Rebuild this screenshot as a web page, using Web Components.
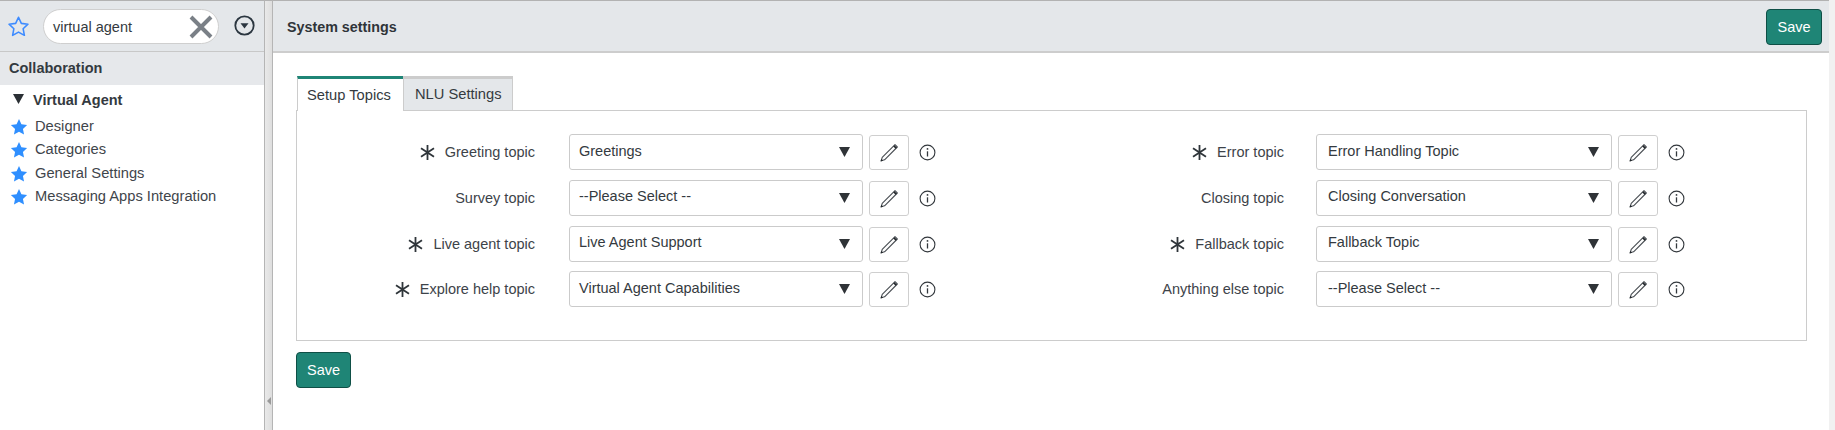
<!DOCTYPE html>
<html lang="en">
<head>
<meta charset="utf-8">
<title>System settings</title>
<style>
html,body{margin:0;padding:0;height:430px;overflow:hidden;background:#fff;font:14.5px "Liberation Sans",Arial,sans-serif;color:#343a40}
</style>
</head>
<body>
<app-shell>
  <nav-sidebar slot="side" heading="Collaboration" group="Virtual Agent" query="virtual agent">
    <nav-link>Designer</nav-link>
    <nav-link>Categories</nav-link>
    <nav-link>General Settings</nav-link>
    <nav-link>Messaging Apps Integration</nav-link>
  </nav-sidebar>
  <settings-page slot="main" heading="System settings">
    <tab-strip slot="tabs" active="Setup Topics" other="NLU Settings"></tab-strip>
    <topic-row label="Greeting topic" value="Greetings" required></topic-row>
    <topic-row label="Error topic" value="Error Handling Topic" required wide></topic-row>
    <topic-row label="Survey topic" value="--Please Select --"></topic-row>
    <topic-row label="Closing topic" value="Closing Conversation" wide></topic-row>
    <topic-row label="Live agent topic" value="Live Agent Support" required></topic-row>
    <topic-row label="Fallback topic" value="Fallback Topic" required wide></topic-row>
    <topic-row label="Explore help topic" value="Virtual Agent Capabilities" required></topic-row>
    <topic-row label="Anything else topic" value="--Please Select --" wide></topic-row>
  </settings-page>
</app-shell>
<script>
const STAR = "M10 1.2 12.7 7 19 7.8 14.4 12.1 15.6 18.4 10 15.3 4.4 18.4 5.6 12.1 1 7.8 7.3 7Z";
function define(name, html){
  customElements.define(name, class extends HTMLElement{
    constructor(){
      super();
      this.attachShadow({mode:"open"});
    }
    connectedCallback(){
      const a = n => this.getAttribute(n) || "";
      this.shadowRoot.innerHTML = typeof html === "function" ? html(a, this) : html;
    }
  });
}
define("app-shell", `
<style>
:host{display:flex;width:1835px;height:430px;box-sizing:border-box;overflow:hidden;font:14.5px "Liberation Sans",Arial,sans-serif;color:#343a40}
.side{width:264px;flex:none;border-top:1px solid #b2b2b2;box-sizing:border-box}
.split{width:9px;flex:none;box-sizing:border-box;border-left:1px solid #b5b5b5;border-right:1px solid #b5b5b5;border-top:1px solid #b2b2b2;background:linear-gradient(90deg,#e9e9e9,#dedede);padding:396px 0 0 1px}
.split i{display:block;width:0;height:0;margin-left:1px;border:4px solid transparent;border-left-width:0;border-right:4px solid #9a9a9a}
.main{width:1556px;flex:none;border-top:1px solid #b2b2b2;box-sizing:border-box}
.rail{flex:1;background:#f1f1f1}
</style>
<div class="side"><slot name="side"></slot></div>
<div class="split"><i></i></div>
<div class="main"><slot name="main"></slot></div>
<div class="rail"></div>`);

define("nav-sidebar", a => `
<style>
:host{display:block}
.top{height:51px;box-sizing:border-box;background:#e4e7ea;border-bottom:1px solid #c8c8c8;display:flex;align-items:center;padding:1px 0 0 8px}
.star{width:21px;height:21px;flex:none}
.pill{margin-left:14px;width:176px;height:35px;box-sizing:border-box;border:1px solid #cfcfcf;border-radius:18px;background:#fff;display:flex;align-items:center;justify-content:space-between;padding:0 5px 0 9px;color:#343a40}
.pill svg{width:24px;height:24px}
.more{width:21px;height:21px;margin:-2px 0 0 15px}
.band{height:33px;box-sizing:border-box;padding:0 0 1px 9px;background:#e6e8eb;display:flex;align-items:center;font-weight:700;color:#343a40}
.grp{display:flex;align-items:center;height:30px;font-weight:700;padding-left:13px;color:#343a40}
.grp svg{width:11px;height:10px;margin-right:9px;margin-top:-3px}
.links{display:flex;flex-direction:column;margin-top:-.5px;padding-left:10px}
</style>
<div class="top">
  <svg class="star" viewBox="0 0 20 20"><path d="${STAR}" fill="none" stroke="#3d8bff" stroke-width="1.5" stroke-linejoin="round"/></svg>
  <div class="pill"><span>${a("query")}</span>
    <svg viewBox="0 0 24 24"><path d="M2 2 22 22M22 2 2 22" stroke="#7a8087" stroke-width="4" fill="none"/></svg></div>
  <svg class="more" viewBox="0 0 21 21"><circle cx="10.5" cy="10.5" r="9.2" fill="none" stroke="#2b3640" stroke-width="1.8"/><path d="M6.5 8.2h8L10.5 13.6Z" fill="#2b3640"/></svg>
</div>
<div class="band">${a("heading")}</div>
<div class="grp"><svg viewBox="0 0 11 10"><path d="M0 0h11L5.5 10Z" fill="#2b3035"/></svg>${a("group")}</div>
<div class="links"><slot></slot></div>`);

define("nav-link", `
<style>
:host{display:flex;align-items:center;height:23.3px;color:#3f454b;font-size:14.7px}
svg{width:18px;height:18px;margin-right:7px;margin-top:2px;flex:none}
</style>
<svg viewBox="0 0 20 20"><path d="${STAR}" fill="#2f8fff"/></svg><slot></slot>`);

define("settings-page", a => `
<style>
:host{display:block}
.head{height:52px;box-sizing:border-box;background:#e4e7ea;border-bottom:2px solid #cdcdcd;display:flex;align-items:center;justify-content:space-between;padding:1px 7px 0 14px;--save-w:56px}
h1{margin:0;font-size:14.3px;font-weight:700;color:#2f3439}
.body{padding:23px 22px 0 23px}
.panel{height:231px;box-sizing:border-box;border:1px solid #cccccc;padding:23px 0 0 0;display:grid;grid-template-columns:748px 1fr;grid-auto-rows:36px;row-gap:9.8px;align-content:start}
.foot{padding-top:11px}
</style>
<div class="head"><h1>${a("heading")}</h1><save-button></save-button></div>
<div class="body">
  <slot name="tabs"></slot>
  <div class="panel"><slot></slot></div>
  <div class="foot"><save-button></save-button></div>
</div>`);

define("save-button", `
<style>
:host{display:inline-block}
button{display:block;width:var(--save-w,55px);height:36px;box-sizing:border-box;margin:0;padding:0;background:#1f8576;border:1px solid #0f4f46;border-radius:4px;color:#fff;font:14.5px "Liberation Sans",Arial,sans-serif}
</style>
<button type="button">Save</button>`);

define("tab-strip", a => `
<style>
:host{display:flex;height:34px;margin-left:1px;position:relative;z-index:1}
div{box-sizing:border-box;height:35px;display:flex;align-items:center;padding-bottom:1px;color:#343a40;font-size:14.7px}
.on{width:106px;padding-left:9px;background:#fff;border-top:3px solid #1f8576;border-left:1px solid #ccc}
.off{width:110px;height:35px;padding-left:11px;background:#e4e7ea;border-top:3px solid #cccccc;border-right:1px solid #ccc;border-left:1px solid #ccc;border-bottom:1px solid #ccc}
</style>
<div class="on">${a("active")}</div><div class="off">${a("other")}</div>`);

define("topic-row", (a, el) => {
  const wide = el.hasAttribute("wide");
  return `
<style>
:host{display:flex;align-items:flex-start}
.lab{width:${wide?239:238}px;flex:none;height:36px;display:flex;align-items:center;justify-content:flex-end;gap:10px;color:#3d4349}
.lab svg{width:15px;height:15px;flex:none;margin-top:1px}
.sel{margin-left:${wide?32:34}px;width:${wide?296:294}px;height:36px;flex:none;box-sizing:border-box;border:1px solid #cbcbcb;border-radius:3px;display:flex;align-items:center;justify-content:space-between;padding:0 12px 3px ${wide?11:9}px;color:#343a40}
.sel svg{width:11px;height:10px;margin-top:3px}
.edit{margin:1px 0 0 6px;width:40px;height:35px;flex:none;box-sizing:border-box;border:1px solid #cfcfcf;border-radius:3px;display:flex;align-items:center;justify-content:center}
.edit svg{width:20px;height:20px;margin-top:1px}
.info{width:17px;height:17px;margin:10px 0 0 10px;flex:none}
</style>
<div class="lab">${el.hasAttribute("required")?`<svg viewBox="0 0 15 15"><path d="M7.5 0v15M1 3.2 14 11.8M14 3.2 1 11.8" stroke="#2f353a" stroke-width="1.8" fill="none"/></svg>`:""}<span>${a("label")}</span></div>
<div class="sel"><span>${a("value")}</span><svg viewBox="0 0 11 10"><path d="M0 0h11L5.5 10Z" fill="#2f3337"/></svg></div>
<div class="edit"><svg viewBox="0 0 18 18"><path d="M14.4 1.5 16.5 3.6 5 15.1 2 16 2.9 13Z" fill="none" stroke="#4a4f54" stroke-width="1" stroke-linejoin="round"/><path d="M13.4 2.5 15.5 4.6" stroke="#22272b" stroke-width="1.6"/><path d="M1.4 16.6 2 14.3 3.7 16Z" fill="#22272b"/></svg></div>
<svg class="info" viewBox="0 0 17 17"><circle cx="8.5" cy="8.5" r="7.4" fill="none" stroke="#33383d" stroke-width="1.1"/><path d="M8.5 7.3v5.2" stroke="#33383d" stroke-width="1.3"/><circle cx="8.5" cy="4.9" r=".9" fill="#33383d"/></svg>`;
});
</script>
</body>
</html>
